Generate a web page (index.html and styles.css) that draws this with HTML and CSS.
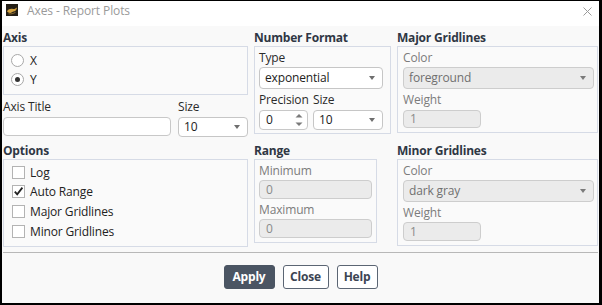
FILE: index.html
```html
<!DOCTYPE html>
<html>
<head>
<meta charset="utf-8">
<link rel="stylesheet" href="styles.css">
</head>
<body>
<div class="window">
  <div class="titlebar">
    <svg class="logo" width="12" height="12" viewBox="0 0 12 12">
      <rect width="12" height="12" fill="#231e16"/>
      <path d="M1 7.2 C2.5 5 5 4.4 7 5 C8.5 5.4 9.6 4.4 11 3.5 C10.6 6 9.2 7.4 7.5 7.6 C6.5 7.8 6 8.8 4.4 8.9 C3 9 1.8 8.3 1 7.2 Z" fill="#d3a13e"/>
      <path d="M2.5 9.8 C5 10.2 7.5 9.5 9.5 8.3" stroke="#9a7630" stroke-width="0.9" fill="none"/>
    </svg>
    <span class="title">Axes - Report Plots</span>
    <svg class="close" width="9" height="9" viewBox="0 0 9 9">
      <path d="M0.5 0.5 L8.5 8.5 M8.5 0.5 L0.5 8.5" stroke="#9a9a9a" stroke-width="1"/>
    </svg>
  </div>
  <div class="content">
    <div class="grid">
      <div class="cell">
        <div class="heading">Axis</div>
        <div class="box axis-box">
          <div class="opt"><span class="radio"></span>X</div>
          <div class="opt"><span class="radio on"></span>Y</div>
        </div>
        <div class="title-row">
          <div class="field">
            <div class="lbl">Axis Title</div>
            <div class="input title-input"></div>
          </div>
          <div class="field">
            <div class="lbl">Size</div>
            <div class="select small-select">10</div>
          </div>
        </div>
      </div>

      <div class="cell">
        <div class="heading">Number Format</div>
        <div class="box nf-box">
          <div class="lbl">Type</div>
          <div class="select type-select">exponential</div>
          <div class="prec-row">
            <div class="field spin-field">
              <div class="lbl">Precision</div>
              <div class="input spin">0
                <svg class="spin-arrows" width="8" height="14" viewBox="0 0 8 14">
                  <path d="M0.5 4.5 L4 1 L7.5 4.5 Z" fill="#7a7a7a"/>
                  <path d="M0.5 9.5 L4 13 L7.5 9.5 Z" fill="#7a7a7a"/>
                </svg>
              </div>
            </div>
            <div class="field">
              <div class="lbl">Size</div>
              <div class="select small-select">10</div>
            </div>
          </div>
        </div>
      </div>

      <div class="cell">
        <div class="heading">Major Gridlines</div>
        <div class="box grid-box major">
          <div class="lbl dis">Color</div>
          <div class="select dis wide-select">foreground</div>
          <div class="lbl dis gap-lbl">Weight</div>
          <div class="input dis weight-input">1</div>
        </div>
      </div>

      <div class="cell">
        <div class="heading">Options</div>
        <div class="box opt-box">
          <div class="chk-row"><span class="chk"></span>Log</div>
          <div class="chk-row"><span class="chk"><svg width="11" height="11" viewBox="0 0 11 11"><polyline points="1.8,5.6 4.2,8.4 9.4,1.6" fill="none" stroke="#222" stroke-width="1.8"/></svg></span>Auto Range</div>
          <div class="chk-row"><span class="chk"></span>Major Gridlines</div>
          <div class="chk-row"><span class="chk"></span>Minor Gridlines</div>
        </div>
      </div>

      <div class="cell">
        <div class="heading">Range</div>
        <div class="box range-box">
          <div class="lbl dis">Minimum</div>
          <div class="input dis range-input">0</div>
          <div class="lbl dis gap-lbl">Maximum</div>
          <div class="input dis range-input">0</div>
        </div>
      </div>

      <div class="cell">
        <div class="heading">Minor Gridlines</div>
        <div class="box grid-box minor">
          <div class="lbl dis">Color</div>
          <div class="select dis wide-select">dark gray</div>
          <div class="lbl dis gap-lbl">Weight</div>
          <div class="input dis weight-input">1</div>
        </div>
      </div>
    </div>
    <div class="sep"></div>
    <div class="buttons">
      <div class="btn primary apply">Apply</div>
      <div class="btn close-btn">Close</div>
      <div class="btn help-btn">Help</div>
    </div>
  </div>
</div>
</body>
</html>
```

FILE: styles.css
```css
* { box-sizing: border-box; margin: 0; padding: 0; }
html, body { margin: 0; width: 602px; height: 305px; overflow: hidden; }
body {
  font-family: "Open Sans", "Noto Sans", sans-serif;
  font-size: 12px;
  color: #222;
  background: #fff;
}
.window {
  width: 602px;
  height: 305px;
  border-style: solid;
  border-color: #000;
  border-width: 1px 3px 2px 2px;
  background: #f9f9f9;
  display: flex;
  flex-direction: column;
}
.titlebar {
  height: 25px;
  flex: none;
  background: #fff;
  display: flex;
  align-items: flex-start;
  padding: 3px 7px 0 4px;
}
.logo { flex: none; }
.title {
  margin-left: 9px;
  margin-top: -1px;
  line-height: 16px;
  color: #9a9a9a;
  letter-spacing: -0.1px;
}
.close { margin-left: auto; margin-top: 3px; }

.content {
  flex: 1;
  display: flex;
  flex-direction: column;
  padding: 4px 1px 0 1px;
}
.grid {
  display: grid;
  grid-template-columns: 245px 137px 201px;
  column-gap: 6px;
  row-gap: 6px;
  align-items: start;
}
.heading {
  font-weight: 700;
  line-height: 16px;
  color: #2f3744;
  letter-spacing: -0.2px;
}
.box {
  border: 1px solid #d6dbe6;
  background: #fafafa;
}
.lbl { line-height: 16px; color: #2a2a2a; letter-spacing: -0.15px; white-space: nowrap; }
.lbl.dis { color: #7c7c7c; }

/* Axis */
.axis-box { height: 49px; padding: 4px 0 5px 7px; }
.opt { height: 19px; display: flex; align-items: center; }
.radio {
  width: 13px; height: 13px;
  border: 1px solid #a8a8a8;
  border-radius: 50%;
  background: #fff;
  margin-right: 6px;
  display: flex; align-items: center; justify-content: center;
}
.radio.on::after {
  content: "";
  width: 5px; height: 5px;
  border-radius: 50%;
  background: #333;
}
.title-row { display: flex; gap: 7px; margin-top: 4px; }
.field { display: flex; flex-direction: column; }
.spin-field { width: 49px; flex: none; }

.input {
  height: 19px;
  border: 1px solid #c8c8c8;
  border-radius: 4px;
  background: #fff;
  padding-left: 6px;
  display: flex;
  align-items: center;
  line-height: 16px;
}
.input.dis { background: #ebebeb; border-color: #cdcdcd; color: #8a8a8a; }
.title-input { width: 168px; margin-top: 2px; }

.select {
  position: relative;
  height: 22px;
  border: 1px solid #c6c6c6;
  border-radius: 4px;
  background: #fff;
  padding-left: 5px;
  display: flex;
  align-items: center;
  line-height: 16px;
  letter-spacing: -0.15px;
}
.select::after {
  content: "";
  position: absolute;
  right: 7px;
  top: 50%;
  margin-top: -2px;
  border-left: 3.5px solid transparent;
  border-right: 3.5px solid transparent;
  border-top: 4px solid #6e6e6e;
}
.select.dis { background: #ebebeb; border-color: #cdcdcd; color: #707070; }
.select.dis::after { border-top-color: #7a7a7a; }
.small-select { width: 70px; height: 20px; margin-top: 2px; }

/* Number format */
.nf-box { padding: 3px 0 3px 4px; }
.type-select { width: 124px; margin-top: 1px; }
.prec-row { display: flex; gap: 5px; margin-top: 3px; }
.spin { width: 49px; height: 20px; margin-top: 2px; position: relative; padding-left: 6px; }
.spin-arrows { position: absolute; right: 4px; top: 2px; }

/* Gridlines */
.grid-box { padding: 3px 3px 4px 5px; }
.wide-select { width: 191px; margin-top: 1px; }
.gap-lbl { margin-top: 3px; }
.weight-input { width: 78px; margin-top: 1px; }
.major .weight-input { height: 18px; margin-top: 2px; }

/* Options */
.opt-box { padding: 2.5px 0 5px 8px; }
.chk-row { height: 19.6px; display: flex; align-items: center; letter-spacing: -0.15px; }
.chk {
  width: 13px; height: 13px;
  border: 1px solid #b3b3b3;
  background: #fff;
  margin-right: 5px;
  display: flex; align-items: center; justify-content: center;
}

/* Range */
.range-box { width: 123px; padding: 3px 0 4px 4px; }
.range-input { width: 113px; margin-top: 1px; }

.sep { height: 1px; background: #b8b8b8; margin-top: 5px; }
.buttons {
  display: flex;
  justify-content: center;
  gap: 8px;
  margin-top: 12px;
}
.btn {
  height: 24px;
  border: 1px solid #5b6573;
  border-radius: 3px;
  background: #fff;
  color: #3b4452;
  font-weight: 700;
  display: flex;
  align-items: center;
  justify-content: center;
  letter-spacing: -0.2px;
}
.btn.primary { background: #4b5563; border-color: #4b5563; color: #fff; }
.apply { width: 51px; }
.close-btn { width: 46px; }
.help-btn { width: 41px; }
```
